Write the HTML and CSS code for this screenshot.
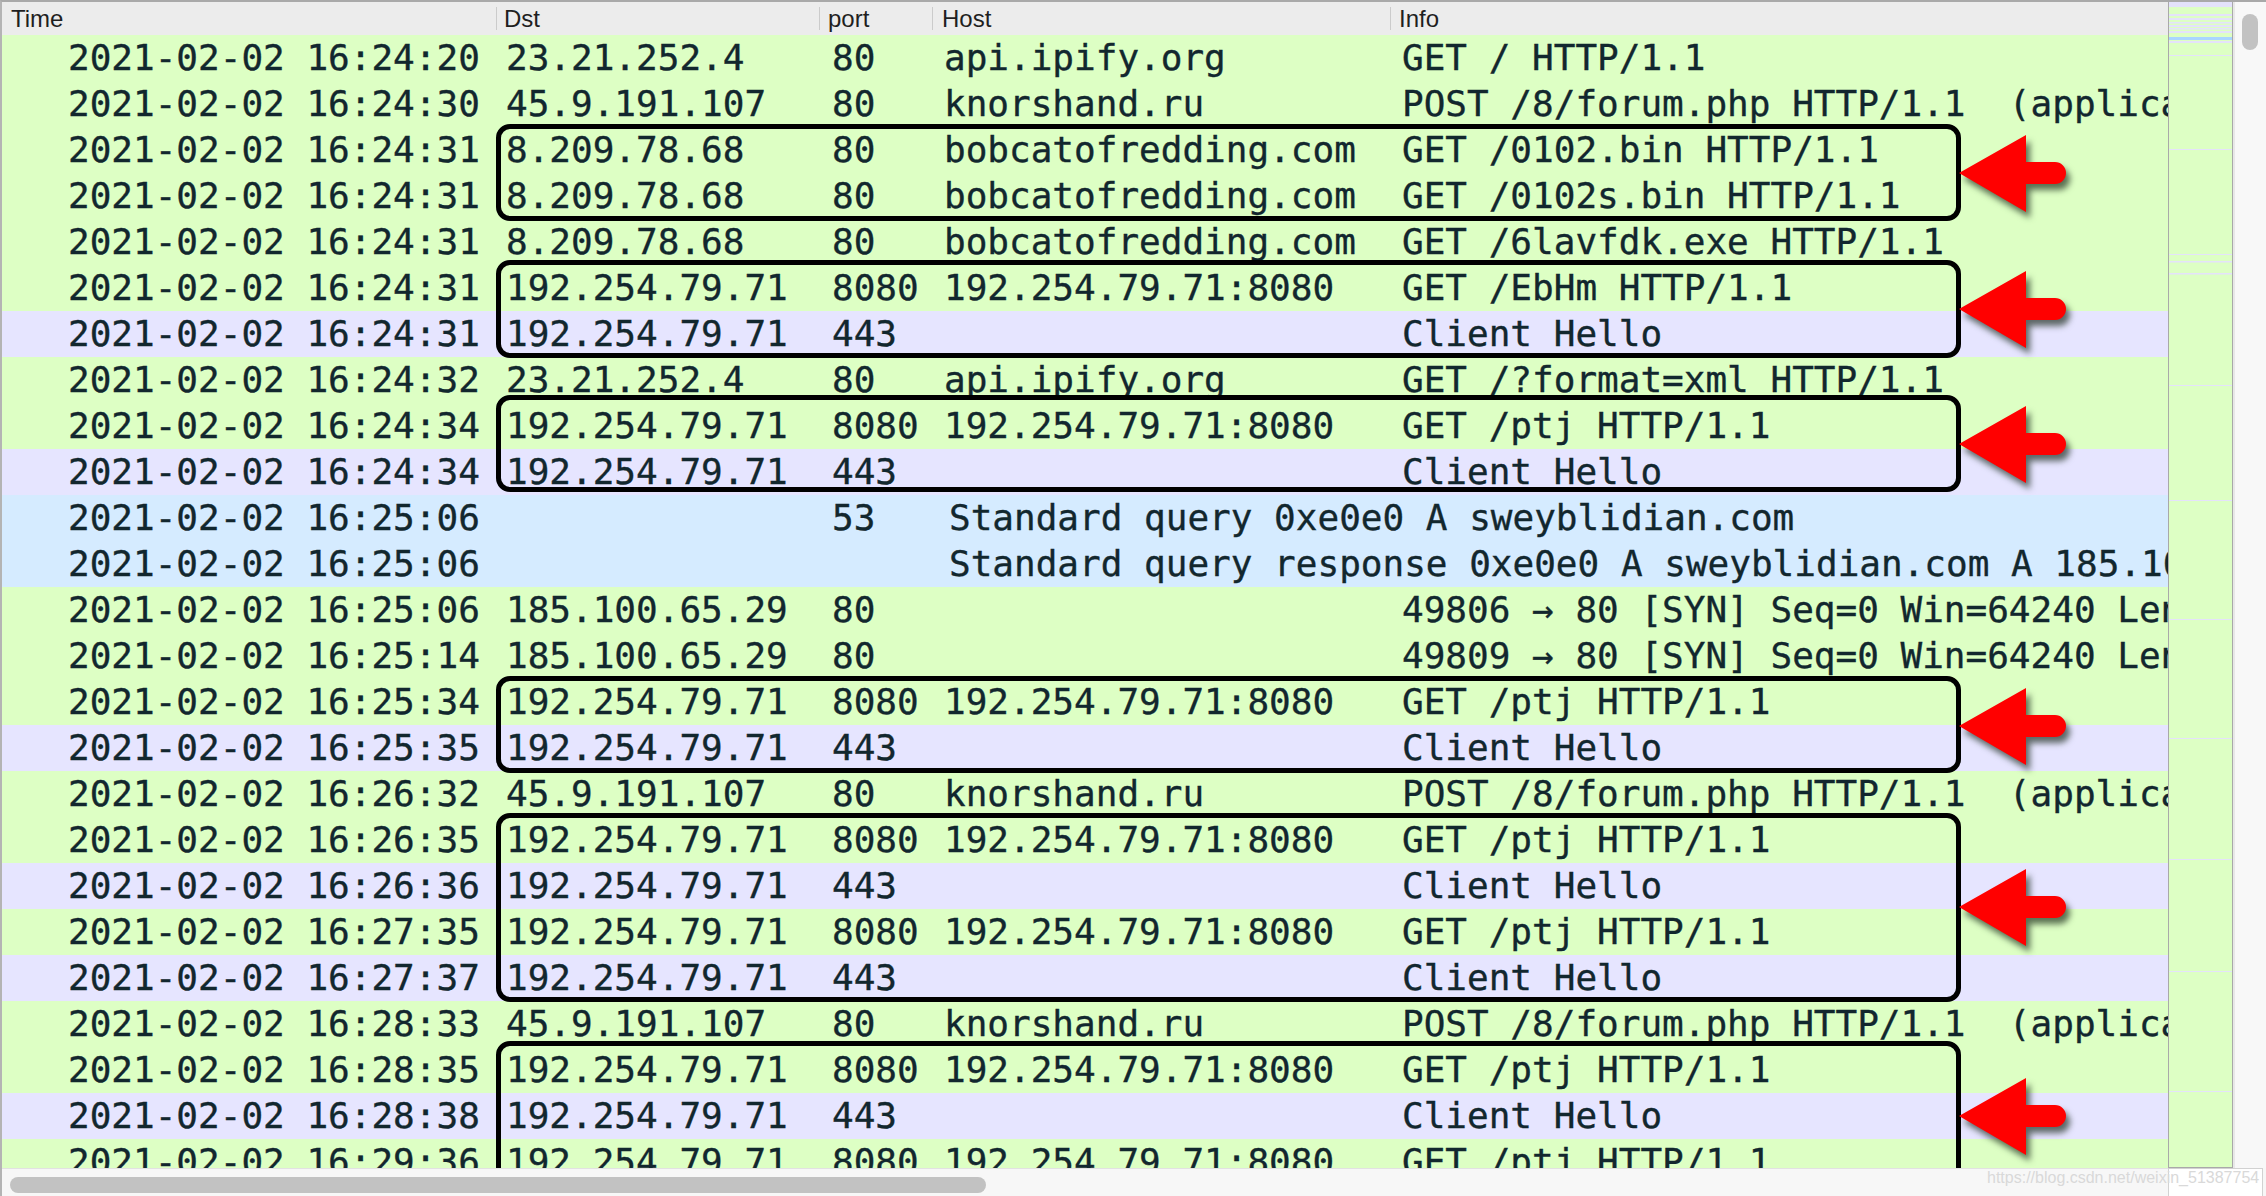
FILE: index.html
```html
<!DOCTYPE html>
<html>
<head>
<meta charset="utf-8">
<link rel="stylesheet" href="styles.css">
</head>
<body>
<div class="window">
  <div class="main">
    <div class="table">
      <div class="head">
        <div class="hc ht">Time</div>
        <div class="hc hd">Dst</div>
        <div class="hc hp">port</div>
        <div class="hc hh">Host</div>
        <div class="hc hi">Info</div>
      </div>
      <div class="rows">
        <div class="r g"><span class="c t">2021-02-02 16:24:20</span><span class="c d">23.21.252.4</span><span class="c p">80</span><span class="c h">api.ipify.org</span><span class="c i">GET / HTTP/1.1</span></div>
        <div class="r g"><span class="c t">2021-02-02 16:24:30</span><span class="c d">45.9.191.107</span><span class="c p">80</span><span class="c h">knorshand.ru</span><span class="c i">POST /8/forum.php HTTP/1.1  (application/x-www-form-urlencoded)</span></div>
        <div class="r g"><span class="c t">2021-02-02 16:24:31</span><span class="c d">8.209.78.68</span><span class="c p">80</span><span class="c h">bobcatofredding.com</span><span class="c i">GET /0102.bin HTTP/1.1</span></div>
        <div class="r g"><span class="c t">2021-02-02 16:24:31</span><span class="c d">8.209.78.68</span><span class="c p">80</span><span class="c h">bobcatofredding.com</span><span class="c i">GET /0102s.bin HTTP/1.1</span></div>
        <div class="r g"><span class="c t">2021-02-02 16:24:31</span><span class="c d">8.209.78.68</span><span class="c p">80</span><span class="c h">bobcatofredding.com</span><span class="c i">GET /6lavfdk.exe HTTP/1.1</span></div>
        <div class="r g"><span class="c t">2021-02-02 16:24:31</span><span class="c d">192.254.79.71</span><span class="c p">8080</span><span class="c h">192.254.79.71:8080</span><span class="c i">GET /EbHm HTTP/1.1</span></div>
        <div class="r l"><span class="c t">2021-02-02 16:24:31</span><span class="c d">192.254.79.71</span><span class="c p">443</span><span class="c h"></span><span class="c i">Client Hello</span></div>
        <div class="r g"><span class="c t">2021-02-02 16:24:32</span><span class="c d">23.21.252.4</span><span class="c p">80</span><span class="c h">api.ipify.org</span><span class="c i">GET /?format=xml HTTP/1.1</span></div>
        <div class="r g"><span class="c t">2021-02-02 16:24:34</span><span class="c d">192.254.79.71</span><span class="c p">8080</span><span class="c h">192.254.79.71:8080</span><span class="c i">GET /ptj HTTP/1.1</span></div>
        <div class="r l"><span class="c t">2021-02-02 16:24:34</span><span class="c d">192.254.79.71</span><span class="c p">443</span><span class="c h"></span><span class="c i">Client Hello</span></div>
        <div class="r b"><span class="c t">2021-02-02 16:25:06</span><span class="c d"></span><span class="c p">53</span><span class="c h q">Standard query 0xe0e0 A sweyblidian.com</span></div>
        <div class="r b"><span class="c t">2021-02-02 16:25:06</span><span class="c d"></span><span class="c p"></span><span class="c h q">Standard query response 0xe0e0 A sweyblidian.com A 185.100.65.29</span></div>
        <div class="r g"><span class="c t">2021-02-02 16:25:06</span><span class="c d">185.100.65.29</span><span class="c p">80</span><span class="c h"></span><span class="c i">49806 → 80 [SYN] Seq=0 Win=64240 Len=0 MSS=1460</span></div>
        <div class="r g"><span class="c t">2021-02-02 16:25:14</span><span class="c d">185.100.65.29</span><span class="c p">80</span><span class="c h"></span><span class="c i">49809 → 80 [SYN] Seq=0 Win=64240 Len=0 MSS=1460</span></div>
        <div class="r g"><span class="c t">2021-02-02 16:25:34</span><span class="c d">192.254.79.71</span><span class="c p">8080</span><span class="c h">192.254.79.71:8080</span><span class="c i">GET /ptj HTTP/1.1</span></div>
        <div class="r l"><span class="c t">2021-02-02 16:25:35</span><span class="c d">192.254.79.71</span><span class="c p">443</span><span class="c h"></span><span class="c i">Client Hello</span></div>
        <div class="r g"><span class="c t">2021-02-02 16:26:32</span><span class="c d">45.9.191.107</span><span class="c p">80</span><span class="c h">knorshand.ru</span><span class="c i">POST /8/forum.php HTTP/1.1  (application/x-www-form-urlencoded)</span></div>
        <div class="r g"><span class="c t">2021-02-02 16:26:35</span><span class="c d">192.254.79.71</span><span class="c p">8080</span><span class="c h">192.254.79.71:8080</span><span class="c i">GET /ptj HTTP/1.1</span></div>
        <div class="r l"><span class="c t">2021-02-02 16:26:36</span><span class="c d">192.254.79.71</span><span class="c p">443</span><span class="c h"></span><span class="c i">Client Hello</span></div>
        <div class="r g"><span class="c t">2021-02-02 16:27:35</span><span class="c d">192.254.79.71</span><span class="c p">8080</span><span class="c h">192.254.79.71:8080</span><span class="c i">GET /ptj HTTP/1.1</span></div>
        <div class="r l"><span class="c t">2021-02-02 16:27:37</span><span class="c d">192.254.79.71</span><span class="c p">443</span><span class="c h"></span><span class="c i">Client Hello</span></div>
        <div class="r g"><span class="c t">2021-02-02 16:28:33</span><span class="c d">45.9.191.107</span><span class="c p">80</span><span class="c h">knorshand.ru</span><span class="c i">POST /8/forum.php HTTP/1.1  (application/x-www-form-urlencoded)</span></div>
        <div class="r g"><span class="c t">2021-02-02 16:28:35</span><span class="c d">192.254.79.71</span><span class="c p">8080</span><span class="c h">192.254.79.71:8080</span><span class="c i">GET /ptj HTTP/1.1</span></div>
        <div class="r l"><span class="c t">2021-02-02 16:28:38</span><span class="c d">192.254.79.71</span><span class="c p">443</span><span class="c h"></span><span class="c i">Client Hello</span></div>
        <div class="r g"><span class="c t">2021-02-02 16:29:36</span><span class="c d">192.254.79.71</span><span class="c p">8080</span><span class="c h">192.254.79.71:8080</span><span class="c i">GET /ptj HTTP/1.1</span></div>
      </div>

      <div class="box b1"></div>
      <div class="box b2"></div>
      <div class="box b3"></div>
      <div class="box b4"></div>
      <div class="box b5"></div>
      <div class="box b6"></div>

      <svg class="arrow a1" viewBox="0 0 110 80"><path d="M0 39 L67 1 L67 28 L96 28 A11 11 0 0 1 96 50 L67 50 L67 78 Z"/></svg>
      <svg class="arrow a2" viewBox="0 0 110 80"><path d="M0 39 L67 1 L67 28 L96 28 A11 11 0 0 1 96 50 L67 50 L67 78 Z"/></svg>
      <svg class="arrow a3" viewBox="0 0 110 80"><path d="M0 39 L67 1 L67 28 L96 28 A11 11 0 0 1 96 50 L67 50 L67 78 Z"/></svg>
      <svg class="arrow a4" viewBox="0 0 110 80"><path d="M0 39 L67 1 L67 28 L96 28 A11 11 0 0 1 96 50 L67 50 L67 78 Z"/></svg>
      <svg class="arrow a5" viewBox="0 0 110 80"><path d="M0 39 L67 1 L67 28 L96 28 A11 11 0 0 1 96 50 L67 50 L67 78 Z"/></svg>
      <svg class="arrow a6" viewBox="0 0 110 80"><path d="M0 39 L67 1 L67 28 L96 28 A11 11 0 0 1 96 50 L67 50 L67 78 Z"/></svg>
    </div>

    <div class="minimap">
      <svg class="mm" viewBox="0 0 63 1165" preserveAspectRatio="none">
        <rect class="mg" x="0" y="0" width="63" height="1165"/>
        <rect class="ml" x="0" y="0" width="63" height="5"/>
        <rect class="ml" x="0" y="12" width="63" height="2"/>
        <rect class="ml" x="0" y="16" width="63" height="2"/>
        <rect class="ml" x="0" y="20" width="63" height="1.5"/>
        <rect class="ml" x="0" y="23" width="63" height="2"/>
        <rect class="ml" x="0" y="26" width="63" height="1.5"/>
        <rect class="ml" x="0" y="29" width="63" height="2"/>
        <rect class="mb" x="0" y="35" width="63" height="3"/>
        <rect class="ml" x="0" y="39" width="63" height="2"/>
        <rect class="ml" x="0" y="53" width="63" height="1"/>
        <rect class="ml" x="0" y="147" width="63" height="1"/>
        <rect class="ml" x="0" y="252" width="63" height="1"/>
        <rect class="ml" x="0" y="259" width="63" height="1.5"/>
        <rect class="ml" x="0" y="271" width="63" height="1.5"/>
        <rect class="ml" x="0" y="383" width="63" height="1"/>
        <rect class="ml" x="0" y="498" width="63" height="1"/>
        <rect class="ml" x="0" y="617" width="63" height="1"/>
        <rect class="ml" x="0" y="736" width="63" height="1"/>
        <rect class="ml" x="0" y="857" width="63" height="1"/>
        <rect class="ml" x="0" y="969" width="63" height="1"/>
        <rect class="ml" x="0" y="1089" width="63" height="1"/>
      </svg>
    </div>

    <div class="vscroll"><div class="vthumb"></div></div>
  </div>

  <div class="bottom">
    <div class="hscroll"><div class="hthumb"></div></div>
    <div class="corner"></div>
    <div class="corner-end"></div>
  </div>

  <div class="watermark">https://blog.csdn.net/weixin_51387754</div>
</div>
</body>
</html>
```

FILE: styles.css
```css
html, body {
  margin: 0;
  padding: 0;
  background: #ffffff;
}

.window {
  position: relative;
  width: 2266px;
  height: 1196px;
  box-sizing: border-box;
  border-top: 2px solid #a9a9a9;
  border-left: 2px solid #b4b4b4;
  overflow: hidden;
  display: flex;
  flex-direction: column;
}

.main {
  display: flex;
  height: 1166px;
  flex: none;
}

.table {
  position: relative;
  width: 2166px;
  flex: none;
  overflow: hidden;
  display: flex;
  flex-direction: column;
}

/* header */
.head {
  display: flex;
  height: 33px;
  box-sizing: border-box;
  padding: 5px 0;
  background: #ececec;
  font-family: "Liberation Sans", Arial, sans-serif;
  font-size: 24px;
  line-height: 23px;
  color: #1f1f1f;
  flex: none;
}

.hc {
  flex: none;
  box-sizing: border-box;
  white-space: nowrap;
}

.ht { width: 494px; padding-left: 9px; }
.hd { width: 323px; padding-left: 7px; border-left: 1px solid #cbcbcb; }
.hp { width: 113px; padding-left: 8px; border-left: 1px solid #cbcbcb; }
.hh { width: 458px; padding-left: 9px; border-left: 1px solid #cbcbcb; }
.hi { flex: 1 0 auto; padding-left: 8px; border-left: 1px solid #cbcbcb; }

/* packet rows */
.rows {
  display: flex;
  flex-direction: column;
  flex: none;
}

.r {
  display: flex;
  height: 46px;
  flex: none;
  overflow: hidden;
  font-family: "DejaVu Sans Mono", "Liberation Mono", monospace;
  font-size: 36px;
  line-height: 46px;
  color: #12272e;
  -webkit-text-stroke: 0.35px #12272e;
}

.r.g { background: #ddffc4; }
.r.l { background: #e6e5ff; }
.r.b { background: #d5ebff; }

.c {
  flex: none;
  box-sizing: border-box;
  white-space: pre;
}

.t { width: 494px; padding-left: 66px; }
.d { width: 323px; padding-left: 10px; }
.p { width: 113px; padding-left: 13px; }
.h { width: 458px; padding-left: 12px; }
.h.q { padding-left: 17px; }
.i { flex: 1 0 auto; padding-left: 12px; }

/* annotation boxes */
.box {
  position: absolute;
  left: 494px;
  width: 1465px;
  box-sizing: border-box;
  border: 5px solid #000000;
  border-radius: 14px;
}

.b1 { top: 122px; height: 97px; }
.b2 { top: 258px; height: 98px; }
.b3 { top: 393px; height: 97px; }
.b4 { top: 674px; height: 97px; }
.b5 { top: 811px; height: 189px; }
.b6 { top: 1039px; height: 200px; }

/* red arrows */
.arrow {
  position: absolute;
  left: 1957px;
  width: 110px;
  height: 80px;
  overflow: visible;
  fill: #ff0000;
  filter: drop-shadow(4px 6px 3px rgba(20, 35, 20, 0.65));
}

.a1 { top: 132px; }
.a2 { top: 268px; }
.a3 { top: 403px; }
.a4 { top: 685px; }
.a5 { top: 866px; }
.a6 { top: 1075px; }

/* overview minimap */
.minimap {
  width: 65px;
  flex: none;
  box-sizing: border-box;
  height: 1166px;
  border-left: 1px solid #a9a9a9;
  border-right: 1px solid #a9a9a9;
  border-bottom: 1px solid #a9a9a9;
}

.mm {
  display: block;
  width: 63px;
  height: 1165px;
}

.mg { fill: #ddffc4; }
.ml { fill: #e4e2fb; }
.mb { fill: #a9d6ff; }

/* vertical scrollbar */
.vscroll {
  width: 33px;
  flex: none;
  box-sizing: border-box;
  background: #f8f8f8;
  border-left: 2px solid #e8e8e8;
  padding: 12px 0 0 7px;
}

.vthumb {
  width: 16px;
  height: 36px;
  border-radius: 8px;
  background: #c2c2c2;
}

/* bottom strip */
.bottom {
  display: flex;
  height: 28px;
  flex: none;
}

.hscroll {
  width: 2166px;
  flex: none;
  box-sizing: border-box;
  background: #f7f7f7;
  border-top: 1px solid #e2e2e2;
  padding: 8px 0 0 8px;
}

.hthumb {
  width: 976px;
  height: 16px;
  border-radius: 8px;
  background: #c2c2c2;
}

.corner {
  width: 95px;
  flex: none;
  box-sizing: border-box;
  background: #ffffff;
  border: 1px solid #d2d2d2;
  border-bottom: none;
}

.corner-end {
  flex: 1;
  background: #f7f7f7;
}

.watermark {
  position: absolute;
  left: 1985px;
  top: 1166px;
  font-family: "Liberation Sans", Arial, sans-serif;
  font-size: 16px;
  line-height: 20px;
  color: #d9d9d9;
  white-space: nowrap;
}
```
